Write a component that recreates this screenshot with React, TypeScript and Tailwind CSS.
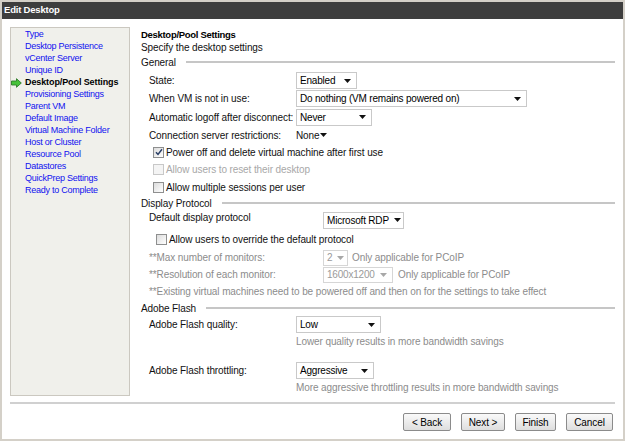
import type { ReactNode } from "react"

const navItems = [
  "Type",
  "Desktop Persistence",
  "vCenter Server",
  "Unique ID",
  "Desktop/Pool Settings",
  "Provisioning Settings",
  "Parent VM",
  "Default Image",
  "Virtual Machine Folder",
  "Host or Cluster",
  "Resource Pool",
  "Datastores",
  "QuickPrep Settings",
  "Ready to Complete",
]

function Caret({ gray }: { gray?: boolean }) {
  return (
    <svg width="7" height="4" viewBox="0 0 7 4" className="shrink-0">
      <path d="M0 0 H7 L3.5 4 Z" fill={gray ? "#a8a8a8" : "#111"} />
    </svg>
  )
}

function Select({ value, className, disabled }: { value: string; className: string; disabled?: boolean }) {
  return (
    <div
      className={`${className} flex items-center justify-between gap-[5px] bg-white border pl-[3px] pr-[5px] ${
        disabled ? "border-[#d6d6d6] text-[#9a9a9a]" : "border-[#c9c9c9] text-black"
      }`}
    >
      <span className="whitespace-nowrap tracking-[-0.2px]">{value}</span>
      <Caret gray={disabled} />
    </div>
  )
}

function Checkbox({ checked, disabled }: { checked?: boolean; disabled?: boolean }) {
  return (
    <div
      className={`w-[11px] h-[11px] shrink-0 border flex items-center justify-center ${
        disabled
          ? "border-[#c8c8c8] bg-[#f4f4f4]"
          : "border-[#8e8f8f] bg-gradient-to-br from-[#dcdcdc] to-white"
      }`}
    >
      {checked && (
        <svg width="8" height="8" viewBox="0 0 8 8">
          <path d="M1 4.2 L3 6.4 L7 1.2" fill="none" stroke="#2a3f66" strokeWidth="1.5" />
        </svg>
      )}
    </div>
  )
}

function Legend({ title, className }: { title: string; className: string }) {
  return (
    <div className={`${className} flex items-center`}>
      <span className="whitespace-nowrap">{title}</span>
      <div className="flex-1 ml-[10px] h-[2px] bg-[#c6c6c6]" />
    </div>
  )
}

function Row({ className, label, labelW, children, gray }: { className: string; label: string; labelW: string; children?: ReactNode; gray?: boolean }) {
  return (
    <div className={`${className} flex items-center pl-[8px]`}>
      <span className={`${labelW} shrink-0 whitespace-nowrap ${gray ? "text-[#8c8c8c]" : ""}`}>{label}</span>
      {children}
    </div>
  )
}

function CheckRow({ className, label, checked, disabled, pad }: { className: string; label: string; checked?: boolean; disabled?: boolean; pad: string }) {
  return (
    <div className={`${className} flex items-center ${pad}`}>
      <Checkbox checked={checked} disabled={disabled} />
      <span className={`ml-[2px] whitespace-nowrap ${disabled ? "text-[#a8a8a8]" : ""}`}>{label}</span>
    </div>
  )
}

function Button({ label, className }: { label: string; className: string }) {
  return (
    <div
      className={`${className} h-[18px] flex items-center justify-center border border-[#8b8b8b] rounded-[2px] bg-gradient-to-b from-[#fafafa] to-[#dedede] text-black`}
    >
      {label}
    </div>
  )
}

export default function App() {
  return (
    <div
      className="w-[625px] h-[441px] bg-white border-2 border-[#d4d0c8] flex flex-col text-[10px] text-[#111] tracking-[-0.1px]"
      style={{ fontFamily: '"Liberation Sans", Arial, sans-serif' }}
    >
      {/* title bar */}
      <div className="h-[17px] shrink-0 bg-[#3e3e3e] flex items-center pl-[2px] text-white font-bold text-[9.5px] tracking-[-0.2px]">
        Edit Desktop
      </div>

      <div className="flex pl-[8px] pt-[8px] h-[377px]">
        {/* wizard steps */}
        <div className="w-[120px] h-[369px] shrink-0 bg-[#f0f0eb] border border-[#cbc8c0] pt-[1px]">
          {navItems.map((item) => {
            const active = item === "Desktop/Pool Settings"
            return (
              <div key={item} className="h-[12px] flex items-center">
                <div className="w-[14px] shrink-0 flex justify-end pr-[3px]">
                  {active && (
                    <svg width="11" height="10" viewBox="0 0 11 10">
                      <path d="M0.5 3 H5.5 V0.7 L10.3 5 L5.5 9.3 V7 H0.5 Z" fill="#47c23a" stroke="#2f7d2a" strokeWidth="0.9" />
                    </svg>
                  )}
                </div>
                <span
                  className={`text-[9px] whitespace-nowrap ${
                    active ? "font-bold text-black tracking-[-0.1px]" : "text-[#1010f0] tracking-[-0.25px]"
                  }`}
                >
                  {item}
                </span>
              </div>
            )
          })}
        </div>

        {/* settings form */}
        <div className="ml-[11px] w-[474px] pt-[2px] flex flex-col">
          <div className="h-[12px] flex items-center font-bold text-[9.5px] tracking-[-0.3px] text-black">Desktop/Pool Settings</div>
          <div className="h-[12px] flex items-center">Specify the desktop settings</div>

          <Legend title="General" className="h-[19px]" />
          <Row className="h-[18px]" label="State:" labelW="w-[147px]">
            <Select value="Enabled" className="w-[61px] h-[17px]" />
          </Row>
          <Row className="h-[18px]" label="When VM is not in use:" labelW="w-[147px]">
            <Select value="Do nothing (VM remains powered on)" className="w-[231px] h-[17px]" />
          </Row>
          <Row className="h-[19px]" label="Automatic logoff after disconnect:" labelW="w-[147px]">
            <Select value="Never" className="w-[76px] h-[17px]" />
          </Row>
          <Row className="h-[17px]" label="Connection server restrictions:" labelW="w-[147px]">
            <div className="flex items-center">
              <span>None</span>
              <Caret />
            </div>
          </Row>
          <CheckRow className="h-[17px]" pad="pl-[12px]" label="Power off and delete virtual machine after first use" checked />
          <CheckRow className="h-[18px]" pad="pl-[12px]" label="Allow users to reset their desktop" disabled />
          <CheckRow className="h-[17px]" pad="pl-[12px]" label="Allow multiple sessions per user" />

          <Legend title="Display Protocol" className="h-[16px]" />
          <Row className="h-[18px]" label="Default display protocol" labelW="w-[174px] pb-[6px]">
            <Select value="Microsoft RDP" className="w-[81px] h-[17px]" />
          </Row>
          <CheckRow className="h-[20px]" pad="pl-[15px]" label="Allow users to override the default protocol" />
          <Row className="h-[17px]" label="**Max number of monitors:" labelW="w-[174px]" gray>
            <Select value="2" className="w-[25px] h-[16px]" disabled />
            <span className="ml-[4px] text-[#8c8c8c] whitespace-nowrap">Only applicable for PCoIP</span>
          </Row>
          <Row className="h-[17px]" label="**Resolution of each monitor:" labelW="w-[174px]" gray>
            <Select value="1600x1200" className="w-[70px] h-[16px]" disabled />
            <span className="ml-[5px] text-[#8c8c8c] whitespace-nowrap">Only applicable for PCoIP</span>
          </Row>
          <div className="h-[17px] flex items-center pl-[8px] text-[#8c8c8c] whitespace-nowrap">
            **Existing virtual machines need to be powered off and then on for the settings to take effect
          </div>

          <Legend title="Adobe Flash" className="h-[16px]" />
          <Row className="h-[17px]" label="Adobe Flash quality:" labelW="w-[147px]">
            <Select value="Low" className="w-[85px] h-[17px]" />
          </Row>
          <div className="h-[17px] flex items-center pl-[155px] text-[#8c8c8c] whitespace-nowrap">
            Lower quality results in more bandwidth savings
          </div>
          <div className="h-[12px]" />
          <Row className="h-[17px]" label="Adobe Flash throttling:" labelW="w-[147px]">
            <Select value="Aggressive" className="w-[78px] h-[17px]" />
          </Row>
          <div className="h-[17px] flex items-center pl-[155px] text-[#8c8c8c] whitespace-nowrap">
            More aggressive throttling results in more bandwidth savings
          </div>
        </div>
      </div>

      {/* footer */}
      <div className="ml-[8px] w-[605px] mt-[6px] h-[2px] bg-[#d0d0d0]" />
      <div className="flex justify-end gap-[10px] pr-[10px] mt-[9px]">
        <Button label="< Back" className="w-[48px]" />
        <Button label="Next >" className="w-[44px]" />
        <Button label="Finish" className="w-[41px]" />
        <Button label="Cancel" className="w-[47px]" />
      </div>
    </div>
  )
}
